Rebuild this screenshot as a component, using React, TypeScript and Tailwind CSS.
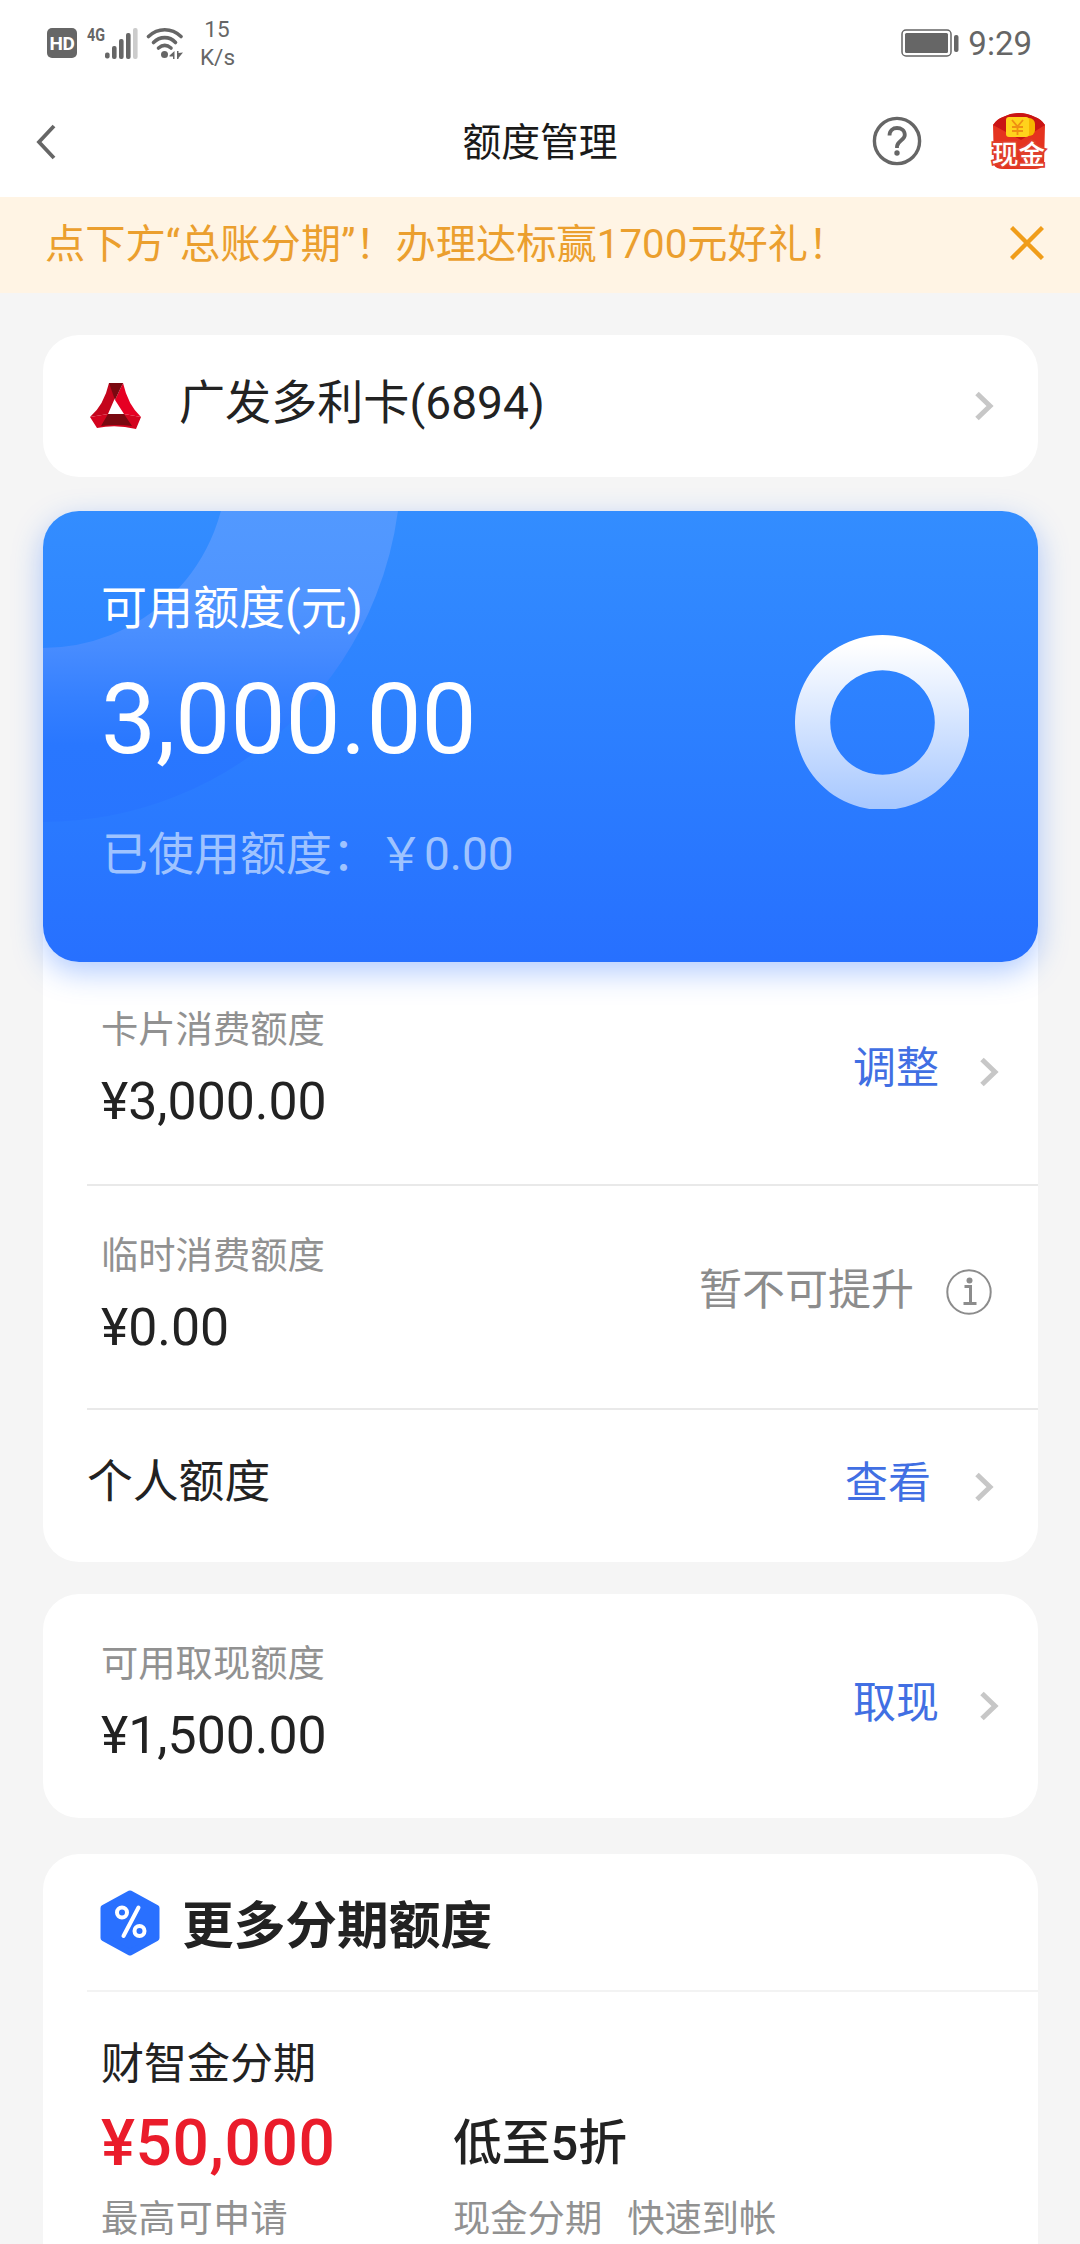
import type { ReactNode } from "react";
import clsx from "clsx";

function StatusBar() {
  return (
    <div className="flex h-[86px] items-center bg-white pl-[47px] pr-[48px] text-[#666]">
      <div className="flex h-[30px] w-[30px] items-center justify-center rounded-[5px] bg-[#666] text-[19px] font-bold leading-none text-white">
        <span className="tracking-[-0.5px]">HD</span>
      </div>

      {/* Mobile signal */}
      <svg className="ml-[8px] h-[50px] w-[53px]" viewBox="-2 -8 53 50" fill="#666">
        <text x="0" y="14.500" fontSize="19" fontWeight="700" textLength="18" lengthAdjust="spacingAndGlyphs">4G</text>
        <rect x="18" y="26.500" width="4.600" height="6" rx="2" />
        <rect x="25" y="20" width="4.600" height="13" rx="2" />
        <rect x="32" y="13" width="4.600" height="20" rx="2" />
        <rect x="39" y="7" width="4.600" height="26" rx="2" />
        <rect x="46" y="2" width="4.600" height="31" rx="2" fill="#ccc" />
      </svg>

      {/* Wifi */}
      <svg className="ml-[8px] h-[34px] w-[38px]" viewBox="0 0 38 34" fill="none" stroke="#666" strokeWidth="3.600" strokeLinecap="round">
        <path d="M2.500 10.500C12 1.500 25.500 1.500 35 10.500" />
        <path d="M7.500 16.500C14 10 23.500 10 29.500 16.500" />
        <path d="M12.500 22C16.500 18.500 21 18.500 25 22" />
        <circle cx="18.500" cy="28.500" r="3.500" fill="#666" stroke="none" />
        <path d="M23.500 29.500L28.500 25V33H27V30.500H23.500Z M31 25H32.500V27L37 26.500L32.500 32V33H31Z" fill="#666" stroke="none" />
      </svg>

      <div className="ml-[16px] w-[34px] text-center text-[22.500px] leading-[28px]">
        <div>15</div>
        <div>K/s</div>
      </div>

      <svg className="ml-auto h-[28px] w-[59px]" viewBox="0 0 59 28" fill="none">
        <rect x="1" y="1" width="49" height="26" rx="4" stroke="#666" strokeWidth="1.500" />
        <rect x="4" y="4" width="43" height="20" rx="1.500" fill="#666" />
        <rect x="53" y="6" width="4.500" height="17" rx="2" fill="#666" />
      </svg>
      <span className="ml-[8px] text-[33px] leading-none">9:29</span>
    </div>
  );
}

function RedEnvelope() {
  return (
    <svg className="h-[68px] w-[60px]" viewBox="-2 -6 60 68">
      <path d="M2 12Q6 6 12 4Q28 -4 44 4Q50 6 54 12L53 52Q50 56 44 56H12Q5 56 3 52Z" fill="#e5331f" />
      <path d="M2 12Q6 6 12 4Q28 -4 44 4Q50 6 54 12L30 27Z" fill="#c91414" />
      <rect x="31" y="5" width="13" height="18" rx="6" fill="#f7b500" />
      <rect x="15" y="4" width="23" height="20" rx="3" fill="#ffd21c" />
      <path d="M21 7L26.500 13.500L32 7M26.500 13.500V22M21 14H32M21 18H32" fill="none" stroke="#ef8f12" strokeWidth="1.800" />
      <text x="1" y="51" fontSize="26.500" fontWeight="500" fill="#fff" stroke="#e0402c" strokeWidth="3.500" paintOrder="stroke">现金</text>
    </svg>
  );
}

function NavBar() {
  return (
    <header className="relative flex h-[111px] items-center justify-between bg-white pl-[36px] pr-[31px]">
      <svg className="h-[36px] w-[20px]" viewBox="0 0 20 36" fill="none" stroke="#666" strokeWidth="3.800">
        <path d="M18 2L3 18L18 34" />
      </svg>
      <h1 className="absolute inset-x-0 pt-[2px] text-center text-[38.800px] leading-[56px] text-[#1a1a1a]">额度管理</h1>
      <div className="flex items-center gap-[67px] pb-[2px]">
        <svg className="h-[50px] w-[50px]" viewBox="0 0 50 50" fill="none" stroke="#666" strokeWidth="3.400">
          <circle cx="25" cy="25" r="22.600" />
          <path d="M17.500 19.500C17.500 14.500 21 12 25 12S32.800 14.500 32.800 19C32.800 24 25 25 25 30.500V32" strokeWidth="3.800" />
          <circle cx="25" cy="37" r="2.700" fill="#666" stroke="none" />
        </svg>
        <RedEnvelope />
      </div>
    </header>
  );
}

function Notice() {
  return (
    <div className="flex h-[96px] items-center justify-between bg-[#fff4e4] pl-[45px] pr-[36px]">
      <p className="whitespace-nowrap text-[40.250px] leading-[56px] text-[#eb9f2e]">
        点下方“总账分期”！办理达标赢1700元好礼！
      </p>
      <svg className="mb-[4px] h-[34px] w-[34px]" viewBox="0 0 34 34" fill="none" stroke="#f09d1a" strokeWidth="4.400">
        <path d="M1.500 1.500L32.500 32.500M32.500 1.500L1.500 32.500" />
      </svg>
    </div>
  );
}

function Chevron() {
  return (
    <svg className="h-[30px] w-[19px] shrink-0" viewBox="0 0 19 30" fill="none" stroke="#c7c7c7" strokeWidth="5">
      <path d="M2 2.500L15 15L2 27.500" />
    </svg>
  );
}

function InfoIcon() {
  return (
    <svg className="h-[46px] w-[46px]" viewBox="0 0 46 46" fill="none" stroke="#8c8c8c" strokeWidth="2">
      <circle cx="23" cy="23" r="21.700" />
      <circle cx="23.500" cy="11.500" r="3" fill="#8c8c8c" stroke="none" />
      <path d="M18.500 17.500H24.500V34M17.500 34.500H30.500" strokeWidth="3" />
    </svg>
  );
}

function BankLogo() {
  return (
    <svg className="h-[46px] w-[52px]" viewBox="0 0 52 46">
      <path d="M19 0H33L28 8L18 31L0 34Q14 22 19 0Z" fill="#c4051c" />
      <path d="M33 0Q38 22 51 34L34 31L25 17Z" fill="#e60023" />
      <path d="M19 0H33L25 17Z" fill="#7a0810" />
      <path d="M0 34L18 31H34L51 34L46 46Q26 41 7 45Z" fill="#d3031e" />
      <path d="M18 31H34L42 43Q26 41 11 43Z" fill="#7a0810" />
      <path d="M25.500 20L31 30.500H20.500Z" fill="#fff" />
    </svg>
  );
}

function QuotaCard() {
  return (
    <section className="relative z-10 h-[451px] rounded-[36px] bg-linear-to-b from-[#338dff] to-[#2770ff] shadow-[0_10px_30px_rgba(40,110,255,0.36)]">
      <svg className="absolute inset-0 h-full w-full rounded-[36px]" viewBox="0 0 995 451">
        <defs>
          <linearGradient id="arc" gradientUnits="userSpaceOnUse" x1="0" y1="0" x2="0" y2="312">
            <stop offset="0" stopColor="#5299ff" />
            <stop offset="0.300" stopColor="#4f94ff" />
            <stop offset="0.450" stopColor="#468bff" />
            <stop offset="0.600" stopColor="#3580ff" />
            <stop offset="0.750" stopColor="#2977ff" />
            <stop offset="1" stopColor="#2875ff" />
          </linearGradient>
        </defs>
        <circle cx="0" cy="-47" r="271" fill="none" stroke="url(#arc)" strokeWidth="174" />
      </svg>
      <div className="relative flex h-full items-center justify-between pl-[58px] pr-[69px]">
        <div className="h-full pt-[67px] text-white">
          <div className="text-[46px] leading-[60px]">可用额度(元)</div>
          <div className="mt-[22px] text-[98px] leading-[120px]">3,000.00</div>
          <div className="mt-[44px] pl-px text-[46px] leading-[60px] text-[#9fc3ff]">已使用额度：￥0.00</div>
        </div>
        <svg className="mt-[-29px] h-[174px] w-[174px]" viewBox="0 0 174 174">
          <defs>
            <linearGradient id="ring" x1="0" y1="0" x2="0" y2="1">
              <stop offset="0.050" stopColor="#fff" />
              <stop offset="1" stopColor="#a6c7ff" />
            </linearGradient>
          </defs>
          <path
            d="M87.500 0A87.500 87.500 0 1 1 87.490 0ZM87.500 35.200A52.300 52.300 0 1 0 87.510 35.200Z"
            fill="url(#ring)"
            fillRule="evenodd"
          />
        </svg>
      </div>
    </section>
  );
}

function Amount({ label, value, className }: { label: string; value: string; className?: string }) {
  return (
    <div className={className}>
      <div className="text-[37.300px] leading-[50px] text-[#919191]">{label}</div>
      <div className="mt-[17px] text-[51.800px] leading-[60px] text-[#222]">{value}</div>
    </div>
  );
}

function Action({ children, className }: { children: ReactNode; className?: string }) {
  return <span className={clsx("text-[43px] leading-[56px]", className)}>{children}</span>;
}

export default function App() {
  return (
    <div className="h-[2244px] w-[1080px] overflow-hidden bg-[#f5f5f5] font-['Roboto','Noto_Sans_CJK_SC',sans-serif]">
      <StatusBar />
      <NavBar />
      <Notice />

      <main className="pl-[43px] pr-[42px] pt-[42px]">
        {/* Card picker */}
        <section className="flex h-[142px] items-center rounded-[36px] bg-white pl-[47px] pr-[44px]">
          <BankLogo />
          <span className="ml-[37px] pb-[6px] text-[46.100px] leading-[60px] text-[#222]">广发多利卡(6894)</span>
          <div className="ml-auto"><Chevron /></div>
        </section>

        <div className="mt-[34px]">
          <QuotaCard />
          <section className="-mt-10 rounded-b-[36px] bg-white pt-10">
            <div className="flex h-[222px] justify-between pl-[58px] pr-[39px]">
              <Amount label="卡片消费额度" value="¥3,000.00" className="pt-[43px]" />
              <div className="flex items-center gap-[41px] pb-[3px]">
                <Action className="pb-[8px] text-[#416fe3]">调整</Action>
                <Chevron />
              </div>
            </div>
            <div className="ml-[44px] h-[2px] bg-[#e9e9e9]" />
            <div className="flex h-[222px] justify-between pl-[58px] pr-[46px]">
              <Amount label="临时消费额度" value="¥0.00" className="pt-[45px]" />
              <div className="flex items-center gap-[32px] pb-[11px]">
                <Action className="pb-[4px] text-[#8c8c8c]">暂不可提升</Action>
                <InfoIcon />
              </div>
            </div>
            <div className="ml-[44px] h-[2px] bg-[#e9e9e9]" />
            <div className="flex h-[152px] items-center justify-between pl-[44px] pr-[44px]">
              <span className="pb-[7px] text-[45.800px] leading-[60px] text-[#222]">个人额度</span>
              <div className="flex items-center gap-[44px] pt-[2px]">
                <Action className="pb-[8px] text-[#416fe3]">查看</Action>
                <Chevron />
              </div>
            </div>
          </section>
        </div>

        <section className="mt-[32px] flex h-[224px] justify-between rounded-[36px] bg-white pl-[58px] pr-[39px]">
          <Amount label="可用取现额度" value="¥1,500.00" className="pt-[45px]" />
          <div className="flex items-center gap-[41px]">
            <Action className="pb-[6px] text-[#416fe3]">取现</Action>
            <Chevron />
          </div>
        </section>

        {/* Instalments */}
        <section className="mt-[36px] h-[430px] rounded-t-[36px] bg-white">
          <div className="flex h-[136px] items-center pl-[57px]">
            <svg className="mt-px h-[66px] w-[60px]" viewBox="0 0 60 66" fill="none">
              <path d="M30 3.500L56.500 18V48L30 62.500L3.500 48V18Z" fill="#2970ff" stroke="#2970ff" strokeWidth="6" strokeLinejoin="round" />
              <g stroke="#fff" strokeWidth="4" strokeLinecap="round">
                <circle cx="22" cy="22.500" r="5" />
                <circle cx="39.500" cy="41" r="5" />
                <path d="M38.500 17.500L23.500 46" />
              </g>
            </svg>
            <h2 className="ml-[22px] pt-[10px] text-[51.700px] font-bold leading-[64px] text-[#222]">更多分期额度</h2>
          </div>
          <div className="ml-[44px] h-[2px] bg-[#f3f3f3]" />
          <div className="pl-[58px] pt-[47px]">
            <div className="text-[43px] leading-[50px] text-[#222]">财智金分期</div>
            <div className="mt-[19px] grid grid-cols-[352px_1fr] items-center whitespace-nowrap">
              <div className="pt-px text-[64px] font-medium leading-[70px] tracking-[0.6px] text-[#ea1c2b]">¥50,000</div>
              <div className="text-[48.800px] font-medium leading-[70px] text-[#222]">低至5折</div>
            </div>
            <div className="mt-[15px] grid grid-cols-[352px_1fr] text-[37.300px] leading-[50px] text-[#919191]">
              <div>最高可申请</div>
              <div className="flex gap-[25px]">
                <span>现金分期</span>
                <span>快速到帐</span>
              </div>
            </div>
          </div>
        </section>
      </main>
    </div>
  );
}
